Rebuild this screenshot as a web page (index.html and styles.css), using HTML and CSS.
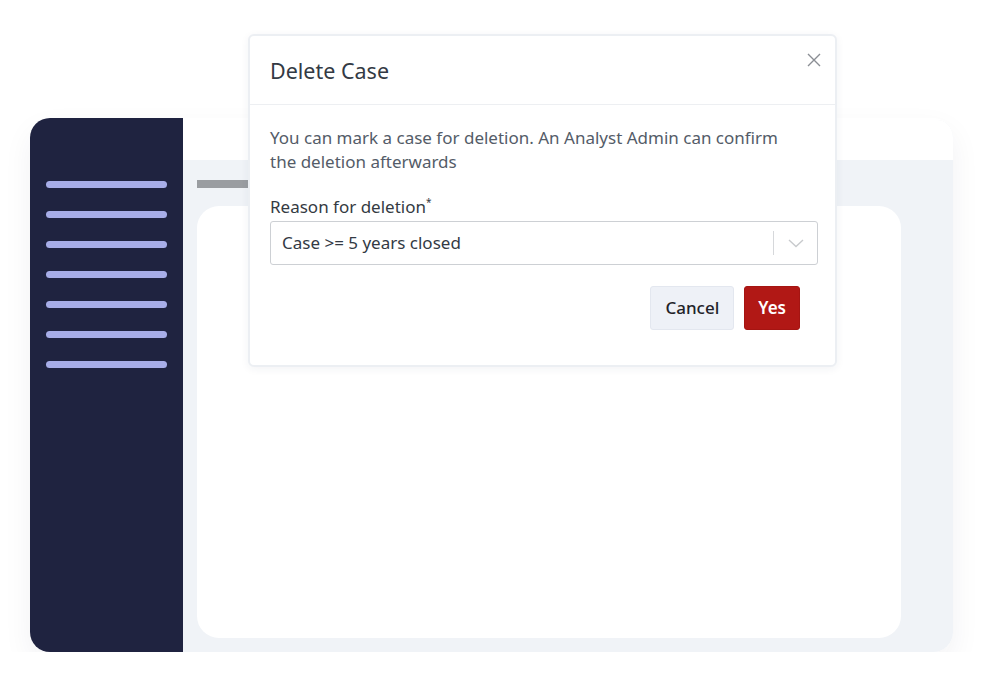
FILE: index.html
```html
<!DOCTYPE html>
<html>
<head>
    <meta charset="UTF-8">
    <title>Delete Case</title>
    <link rel="stylesheet" href="styles.css">
</head>
<body>
    <div class="app">
        <div class="sidebar">
            <span class="nav-line"></span>
            <span class="nav-line"></span>
            <span class="nav-line"></span>
            <span class="nav-line"></span>
            <span class="nav-line"></span>
            <span class="nav-line"></span>
            <span class="nav-line"></span>
        </div>
        <div class="main">
            <div class="topbar"></div>
            <div class="content">
                <div class="page-title-bar"></div>
                <div class="card"></div>
            </div>
        </div>
    </div>

    <div class="modal">
        <div class="modal-header">
            <h1 class="modal-title">Delete Case</h1>
            <button class="close-button" aria-label="Close">
                <svg viewBox="0 0 14 14" width="14" height="14" fill="none" stroke="currentColor" stroke-width="1.4">
                    <path d="M1 1L13 13M13 1L1 13"></path>
                </svg>
            </button>
        </div>
        <div class="modal-body">
            <p class="modal-text">You can mark a case for deletion. An Analyst Admin can confirm the deletion afterwards</p>
            <label class="field-label">Reason for deletion<sup>*</sup></label>
            <div class="select">
                <span class="select-value">Case &gt;= 5 years closed</span>
                <span class="select-separator"></span>
                <span class="select-arrow">
                    <svg viewBox="0 0 20 20" width="20" height="20" fill="none" stroke="currentColor" stroke-width="1.4">
                        <path d="M3 7L10 13.5L17 7"></path>
                    </svg>
                </span>
            </div>
            <div class="modal-actions">
                <button class="button button-secondary">Cancel</button>
                <button class="button button-danger">Yes</button>
            </div>
        </div>
    </div>
</body>
</html>
```

FILE: styles.css
```css
body {
    margin: 0;
    background-color: #ffffff;
    font-family: "Noto Sans", "Open Sans", sans-serif;
}

.app {
    display: flex;
    width: 923px;
    height: 534px;
    margin: 118px 0 0 30px;
    border-radius: 20px;
    overflow: hidden;
    box-shadow: 0 12px 30px rgba(30, 40, 70, 0.06);
}

.sidebar {
    width: 153px;
    flex-shrink: 0;
    background-color: #1f2340;
    display: flex;
    flex-direction: column;
    gap: 23px;
    padding: 63px 16px 0 16px;
    box-sizing: border-box;
}

.nav-line {
    display: block;
    width: 121px;
    height: 7px;
    border-radius: 4px;
    background-color: #a7ade8;
}

.main {
    flex: 1;
    display: flex;
    flex-direction: column;
    background-color: #f0f3f7;
    border-top-right-radius: 16px;
    margin-top: 2px;
}

.topbar {
    height: 40px;
    background-color: #ffffff;
    border-top-right-radius: 16px;
}

.content {
    flex: 1;
    padding: 20px 52px 14px 14px;
    display: flex;
    flex-direction: column;
}

.page-title-bar {
    width: 80px;
    height: 8px;
    background-color: #9a9da1;
}

.card {
    flex: 1;
    margin-top: 18px;
    background-color: #ffffff;
    border-radius: 22px;
}

.modal {
    position: absolute;
    top: 34px;
    left: 248px;
    width: 589px;
    box-sizing: border-box;
    background-color: #ffffff;
    border: 2px solid #eceff3;
    border-radius: 6px;
    box-shadow: 0 2px 8px rgba(40, 50, 80, 0.06);
}

.modal-header {
    display: flex;
    align-items: center;
    justify-content: space-between;
    height: 68px;
    padding: 0 14px 0 20px;
    border-bottom: 1px solid #edeff2;
}

.modal-title {
    margin: 0;
    font-size: 21.5px;
    font-weight: 400;
    color: #333a44;
}

.close-button {
    align-self: flex-start;
    margin-top: 17px;
    padding: 0;
    border: none;
    background: none;
    color: #8a8e94;
    cursor: pointer;
    display: flex;
}

.modal-body {
    padding: 21px 17px 35px 20px;
    display: flex;
    flex-direction: column;
}

.modal-text {
    margin: 0;
    font-size: 17px;
    line-height: 24px;
    color: #545c68;
    padding-right: 30px;
}

.field-label {
    margin-top: 21px;
    font-size: 17px;
    line-height: 24px;
    color: #343a42;
}

.field-label sup {
    font-size: 10px;
    line-height: 0;
}

.select {
    display: flex;
    align-items: center;
    height: 44px;
    margin-top: 2px;
    box-sizing: border-box;
    border: 1px solid #cdd0d4;
    border-radius: 3px;
    padding-left: 11px;
}

.select-value {
    flex: 1;
    font-size: 17px;
    color: #333a44;
    padding-bottom: 2px;
}

.select-separator {
    width: 1px;
    height: 24px;
    background-color: #d6d8db;
}

.select-arrow {
    display: flex;
    align-items: center;
    justify-content: center;
    width: 43px;
    color: #c8cacd;
}

.modal-actions {
    display: flex;
    justify-content: flex-end;
    gap: 10px;
    margin-top: 21px;
    padding-right: 18px;
}

.button {
    height: 44px;
    padding: 0 14px 1px 14px;
    border-radius: 3px;
    font-family: "Noto Sans", "Open Sans", sans-serif;
    font-size: 17px;
    font-weight: 500;
    cursor: pointer;
}

.button-secondary {
    background-color: #eef1f7;
    border: 1px solid #e3e7ef;
    color: #1f2329;
}

.button-danger {
    padding: 0 13px 1px 13px;
    background-color: #b11815;
    border: 1px solid #a51512;
    color: #ffffff;
    font-weight: 600;
}
```
